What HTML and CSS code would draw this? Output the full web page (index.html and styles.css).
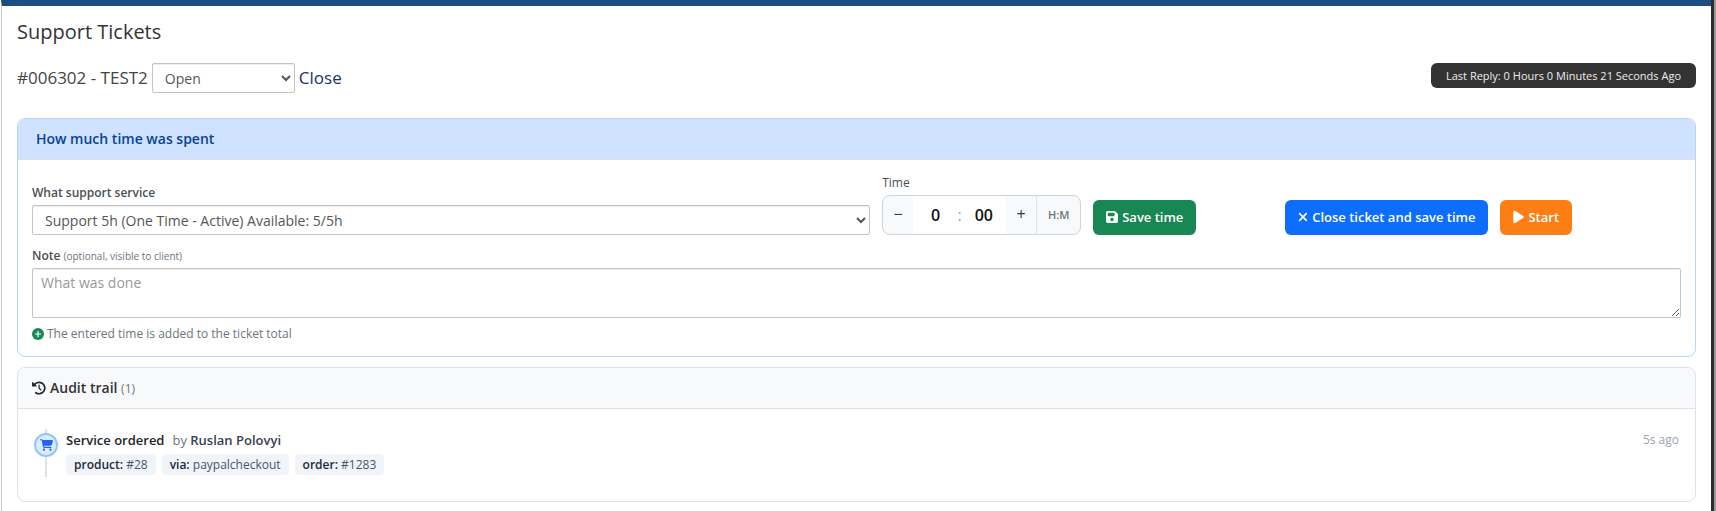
FILE: index.html
```html
<!DOCTYPE html>
<html lang="en">
<head>
    <meta charset="UTF-8">
    <meta name="viewport" content="width=device-width, initial-scale=1.0">
    <title>Support Tickets</title>
    <link rel="stylesheet" href="styles.css">
</head>
<body>
    <main class="page">
        <h1>Support Tickets</h1>

        <!-- Ticket heading -->
        <div class="ticket-head">
            <label for="status">#006302 - TEST2</label>
            <select id="status" class="field status-select">
                <option>Open</option>
                <option>Closed</option>
            </select>
            <a href="#" class="close-link">Close</a>
            <span class="last-reply">Last Reply: 0 Hours 0 Minutes 21 Seconds Ago</span>
        </div>

        <!-- Time spent -->
        <section class="card time-card">
            <h2 class="card-header">How much time was spent</h2>
            <form class="card-body">
                <div class="time-row">
                    <div class="form-group">
                        <label for="service">What support service</label>
                        <select id="service" class="field">
                            <option>Support 5h (One Time - Active) Available: 5/5h</option>
                        </select>
                    </div>
                    <div class="form-group">
                        <label for="hours" class="time-label">Time</label>
                        <div class="stepper">
                            <button type="button" class="step">−</button>
                            <div class="step-values">
                                <input type="text" id="hours" value="0">
                                <span>:</span>
                                <input type="text" id="minutes" value="00" aria-label="Minutes">
                            </div>
                            <button type="button" class="step">+</button>
                            <span class="step-unit">H:M</span>
                        </div>
                    </div>
                    <div class="actions">
                        <button type="button" class="btn save">
                            <svg width="12" height="14" viewBox="0 0 448 512"><path d="M64 32C28.700 32 0 60.700 0 96v320c0 35.300 28.700 64 64 64h320c35.300 0 64-28.700 64-64V173.300c0-17-6.700-33.300-18.700-45.300L352 50.700C340 38.700 323.700 32 306.700 32H64zm0 96c0-17.700 14.300-32 32-32h192c17.700 0 32 14.300 32 32v64c0 17.700-14.300 32-32 32H96c-17.700 0-32-14.300-32-32v-64zm160 160a64 64 0 1 1 0 128 64 64 0 1 1 0-128z"/></svg>
                            Save time
                        </button>
                    </div>
                    <div class="actions">
                        <button type="button" class="btn close">
                            <svg width="10" height="14" viewBox="0 0 384 512"><path d="M342.600 150.600c12.500-12.500 12.500-32.800 0-45.300s-32.800-12.500-45.300 0L192 210.700 86.600 105.400c-12.500-12.500-32.800-12.500-45.300 0s-12.500 32.800 0 45.300L146.700 256 41.400 361.400c-12.500 12.500-12.500 32.800 0 45.300s32.800 12.500 45.300 0L192 301.300l105.400 105.300c12.500 12.500 32.800 12.500 45.300 0s12.500-32.800 0-45.300L237.300 256l105.300-105.400z"/></svg>
                            Close ticket and save time
                        </button>
                        <button type="button" class="btn start">
                            <svg width="11" height="14" viewBox="0 0 384 512"><path d="M73 39c-14.800-9.100-33.400-9.400-48.500-.9S0 62.600 0 80v352c0 17.400 9.400 33.400 24.500 41.900s33.700 8.100 48.500-.9l288-176c14.300-8.700 23-24.200 23-41s-8.700-32.200-23-41L73 39z"/></svg>
                            Start
                        </button>
                    </div>
                </div>

                <label for="note" class="note-label">Note <small>(optional, visible to client)</small></label>
                <textarea id="note" class="field" placeholder="What was done"></textarea>
                <p class="hint">
                    <svg width="12" height="12" viewBox="0 0 512 512"><circle cx="256" cy="256" r="256" fill="#198754"/><path d="M256 144v224M144 256h224" stroke="#fff" stroke-width="52" stroke-linecap="round"/></svg>
                    The entered time is added to the ticket total
                </p>
            </form>
        </section>

        <!-- Audit trail -->
        <section class="card audit-card">
            <h2 class="card-header">
                <svg width="14" height="14" viewBox="0 0 512 512" fill="none" stroke="#212529" stroke-width="62" stroke-linecap="round" stroke-linejoin="round"><path d="M82 148A208 208 0 1 1 140 428"/><path d="M258 150v110l66 66" stroke-width="48"/><path d="M24 60v122h122z" fill="#212529" stroke-width="40"/></svg>
                <span>Audit trail <small>(1)</small></span>
            </h2>
            <div class="card-body">
                <div class="event">
                    <div class="event-line">
                        <span class="event-icon">
                            <svg width="13" height="12" viewBox="0 0 576 512"><path fill="#2563eb" d="M0 24C0 10.700 10.700 0 24 0h45.500c22 0 41.500 12.800 50.600 32h411c26.300 0 45.500 25 38.600 50.400l-41 152.300c-8.500 31.400-37 53.300-69.500 53.300H170.700l5.400 28.500c2.200 11.300 12.100 19.500 23.600 19.500H488c13.300 0 24 10.700 24 24s-10.700 24-24 24H199.700c-34.600 0-64.300-24.600-70.700-58.500L77.400 54.500c-.7-3.800-4-6.500-7.900-6.500H24C10.700 48 0 37.300 0 24z"/><circle cx="176" cy="464" r="48" fill="#2563eb"/><circle cx="464" cy="464" r="48" fill="#2563eb"/></svg>
                        </span>
                    </div>
                    <div class="event-main">
                        <div class="event-title">
                            <strong>Service ordered</strong>
                            <span class="event-by">by <b>Ruslan Polovyi</b></span>
                            <time>5s ago</time>
                        </div>
                        <div class="tags">
                            <span class="tag"><b>product:</b> #28</span>
                            <span class="tag"><b>via:</b> paypalcheckout</span>
                            <span class="tag"><b>order:</b> #1283</span>
                        </div>
                    </div>
                </div>
            </div>
        </section>
    </main>
</body>
</html>
```
FILE: styles.css
```css
* {
    box-sizing: border-box;
}
html {
    background: #999;
}
body {
    margin: 0 2px 0 0;
    min-height: 100vh;
    border-right: 3px solid #2d2d2d;
    background: #fff;
    font-family: "Open Sans", sans-serif;
    font-size: 14px;
    line-height: 20px;
    color: #333;
}
button, input, select, textarea {
    font-family: inherit;
}
.page {
    min-height: 100vh;
    margin-left: 1px;
    padding: 12px 15px 9px;
    border-top: 6px solid #1c4f80;
    border-left: 1px solid #ccc;
}
h1 {
    margin: 0 0 18px;
    font-size: 20px;
    font-weight: 400;
    line-height: 27px;
}

/* Ticket heading */
.ticket-head {
    display: flex;
    align-items: center;
    gap: 4px;
    margin-bottom: 25px;
    font-size: 17px;
    color: #444;
}
.field {
    display: block;
    width: 100%;
    height: 30px;
    padding: 4px 8px;
    border: 1px solid #c4c4c4;
    border-radius: 2px;
    background-color: #fff;
    box-shadow: inset 0 1px 1px rgba(0, 0, 0, 0.075);
    font-size: 14px;
    color: #555;
}
.status-select {
    width: 143px;
}
.close-link {
    color: #1c2f66;
    text-decoration: none;
}
.last-reply {
    align-self: flex-start;
    margin-left: auto;
    padding: 4px 15px 3px;
    border-radius: 6px;
    background: #333;
    color: #eee;
    font-size: 11px;
    line-height: 18px;
}

/* Cards */
.card {
    border: 1px solid #dee2e6;
    border-radius: 8px;
    overflow: hidden;
}
.card-header {
    display: flex;
    align-items: center;
    gap: 4px;
    height: 41px;
    margin: 0;
    border-bottom: 1px solid #dee2e6;
    background: #f8f9fa;
    font-size: 14px;
    font-weight: 600;
    line-height: 20px;
}
small {
    font-weight: 400;
    color: #6c757d;
}
.time-card {
    margin-bottom: 10px;
    border-color: #b6d4fe;
}
.time-card .card-header {
    padding: 0 18px;
    background: #cfe2ff;
    color: #084298;
}
.time-card .card-body {
    padding: 14px 14px 12px;
}

/* Time form */
.time-row {
    display: grid;
    grid-template-columns: 36fr 199px 180px 17fr;
    align-items: end;
    gap: 12px;
}
.form-group label,
.note-label {
    display: block;
    margin-bottom: 3px;
    font-size: 12px;
    font-weight: 600;
    line-height: 18px;
    color: #495057;
}
.form-group .time-label {
    font-weight: 500;
}
.stepper {
    display: flex;
    height: 40px;
    border: 1px solid #ced4da;
    border-radius: 8px;
    background: #f8f9fa;
    overflow: hidden;
}
.step {
    width: 30px;
    padding: 0 0 3px;
    border: 0;
    background: none;
    font-size: 16px;
    color: #343a40;
}
.step-values {
    flex: 1;
    display: flex;
    align-items: center;
    justify-content: center;
    background: #fff;
    color: #94a3b8;
    font-size: 16px;
}
.step-values input {
    width: 44px;
    padding: 0;
    border: 0;
    background: none;
    text-align: center;
    font-size: 16px;
    font-weight: 600;
    color: #111;
}
.step-unit {
    width: 44px;
    border-left: 1px solid #dee2e6;
    text-align: center;
    font-size: 11px;
    font-weight: 600;
    line-height: 38px;
    color: #6c757d;
}
.actions {
    display: flex;
    gap: 12px;
}
.btn {
    display: flex;
    align-items: center;
    gap: 4px;
    height: 35px;
    padding: 0 13px 1px;
    border: 0;
    border-radius: 6px;
    color: #fff;
    font-size: 13px;
    font-weight: 600;
    white-space: nowrap;
    cursor: pointer;
}
.btn svg {
    fill: #fff;
}
.btn.save {
    background: #198754;
}
.btn.close {
    background: #0d6efd;
}
.btn.start {
    background: #fd7e14;
}
.note-label {
    margin-top: 12px;
}
.note-label small {
    font-size: 10px;
}
textarea.field {
    height: 50px;
    line-height: 20px;
    resize: vertical;
}
textarea::placeholder {
    color: #999;
}
.hint {
    display: flex;
    align-items: center;
    gap: 3px;
    margin: 6px 0 0;
    font-size: 12px;
    color: #6c757d;
}

/* Audit trail */
.audit-card .card-header {
    padding: 0 14px;
}
.audit-card .card-header small {
    font-size: 12px;
}
.audit-card .card-body {
    padding: 20px 16px 24px;
}
.event {
    display: flex;
    gap: 8px;
}
.event-line {
    width: 24px;
    height: 48px;
    padding-top: 4px;
    background: linear-gradient(#dee2e6, #dee2e6) center / 2px 100% no-repeat;
}
.event-icon {
    display: flex;
    align-items: center;
    justify-content: center;
    height: 24px;
    border: 2px solid #93c5fd;
    border-radius: 50%;
    background: #dbeafe;
}
.event-main {
    flex: 1;
}
.event-title {
    display: flex;
    gap: 8px;
    margin-bottom: 4px;
    padding-top: 1px;
    font-size: 13px;
    color: #6c757d;
}
.event-title strong {
    font-weight: 600;
    color: #212529;
}
.event-title b {
    font-weight: 600;
    color: #374151;
}
.event-title time {
    margin-left: auto;
    font-size: 12px;
    color: #9ca3af;
}
.tags {
    display: flex;
    gap: 6px;
}
.tag {
    padding: 0 8px;
    border-radius: 4px;
    background: #f1f5f9;
    font-size: 12px;
    line-height: 21px;
    color: #475569;
}
.tag b {
    font-weight: 600;
    color: #1e293b;
}
```
